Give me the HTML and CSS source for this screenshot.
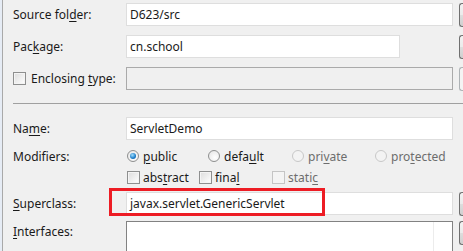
FILE: index.html
```html
<!DOCTYPE html>
<html>
<head>
<meta charset="utf-8">
<link rel="stylesheet" href="styles.css">
</head>
<body>
<div class="frame">
  <div class="row r1">
    <div class="label">Source fol<u>d</u>er:</div>
    <div class="field">D623/src</div>
    <div class="btn"></div>
  </div>
  <div class="row r2">
    <div class="label">Pac<u>k</u>age:</div>
    <div class="field short">cn.school</div>
    <div class="btn"></div>
  </div>
  <div class="row r3">
    <div class="label chklabel"><span class="chk"></span><span>Enclosing <u>t</u>ype:</span></div>
    <div class="field disabled"></div>
    <div class="btn dis"></div>
  </div>
  <div class="sep"></div>
  <div class="row r4">
    <div class="label">Na<u>m</u>e:</div>
    <div class="field">ServletDemo</div>
  </div>
  <div class="row r5">
    <div class="label">Modifiers:</div>
    <div class="opts">
      <span class="opt w81"><span class="radio on"></span><span><u>p</u>ublic</span></span>
      <span class="opt w84"><span class="radio"></span><span>defa<u>u</u>lt</span></span>
      <span class="opt w83 off"><span class="radio dis"></span><span>pri<u>v</u>ate</span></span>
      <span class="opt off"><span class="radio dis"></span><span>pro<u>t</u>ected</span></span>
    </div>
  </div>
  <div class="row r6">
    <div class="label"></div>
    <div class="opts">
      <span class="opt w72"><span class="chk"></span><span>abs<u>t</u>ract</span></span>
      <span class="opt w73"><span class="chk"></span><span>fina<u>l</u></span></span>
      <span class="opt off"><span class="chk dis"></span><span>stati<u>c</u></span></span>
    </div>
  </div>
  <div class="row r7">
    <div class="label"><u>S</u>uperclass:</div>
    <div class="field">javax.servlet.GenericServlet</div>
    <div class="btn"></div>
    <div class="redbox"></div>
  </div>
  <div class="row r8">
    <div class="label top"><u>I</u>nterfaces:</div>
    <div class="list"><div class="track"></div></div>
    <div class="btn"></div>
  </div>
</div>
</body>
</html>
```

FILE: styles.css
```css
html, body {
  margin: 0;
  padding: 0;
  width: 463px;
  height: 251px;
  overflow: hidden;
  background: #f0f0f0;
}
body {
  font-family: "Noto Sans", "Open Sans", sans-serif;
  font-size: 12px;
  color: #1a1a1a;
}
u { text-decoration: underline; text-underline-offset: 2px; }
.frame {
  position: relative;
  margin-left: 2px;
  border-left: 1px solid #a9a9a9;
  height: 251px;
  box-shadow: -2px 0 0 #e6ecf5;
  padding-left: 10px;
  box-sizing: border-box;
  overflow: hidden;
}
.row {
  display: flex;
  align-items: center;
  height: 23px;
  position: relative;
}
.label {
  width: 113px;
  flex: none;
  white-space: nowrap;
}
.chklabel { display: flex; align-items: center; }
.chklabel .chk { margin-right: 5px; }
.field {
  width: 327px;
  height: 23px;
  box-sizing: border-box;
  background: #fff;
  border: 1px solid #dedede;
  padding-left: 3px;
  line-height: 21px;
  flex: none;
  white-space: nowrap;
  overflow: hidden;
}
.field.short { width: 274px; margin-right: 53px; }
.field.disabled { background: #f0f0f0; border-color: #aaaaaa; }
.btn {
  margin-left: 6px;
  width: 4px;
  height: 24px;
  box-sizing: border-box;
  border: 1px solid #707070;
  border-right: none;
  border-radius: 3px 0 0 3px;
  background: linear-gradient(#f2f2f2, #ebebeb 50%, #dddddd 51%, #cfcfcf);
  flex: none;
}
.btn.dis { border-color: #adb2b5; background: #f4f4f4; }
.r1 { margin-top: 3px; }
.r2 { margin-top: 9px; }
.r3 { margin-top: 9px; }
.sep {
  height: 1px;
  background: #a0a0a0;
  margin-top: 13px;
}
.r4 { margin-top: 13px; }
.r5 { margin-top: 7px; height: 18px; }
.r6 { margin-top: 3px; height: 18px; }
.r7 { margin-top: 6px; }
.r8 { margin-top: 6px; height: 40px; align-items: flex-start; }
.label.top { padding-top: 2px; }
.opts { display: flex; align-items: center; margin-left: 1px; }
.opt { display: flex; align-items: center; white-space: nowrap; flex: none; }
.opt.off { color: #6d6d6d; }
.w81 { width: 81px; }
.w84 { width: 84px; }
.w83 { width: 83px; }
.w72 { width: 72px; }
.w73 { width: 73px; }
.radio {
  width: 12px;
  height: 12px;
  box-sizing: border-box;
  border-radius: 50%;
  border: 1px solid #8e8f8f;
  background: radial-gradient(circle at 60% 65%, #ffffff, #e3e3e3);
  margin-right: 4px;
  position: relative;
  flex: none;
}
.radio.on::after {
  content: "";
  position: absolute;
  left: 2px; top: 2px;
  width: 6px; height: 6px;
  border-radius: 50%;
  background: radial-gradient(circle at 40% 35%, #a3e0ff, #1a7bc7 60%, #0d5a9e);
}
.radio.dis { border-color: #c8c8c8; background: #f3f3f3; }
.chk {
  width: 13px;
  height: 13px;
  box-sizing: border-box;
  border: 1px solid #8e8f8f;
  background: linear-gradient(135deg, #dcdcdc, #ffffff);
  box-shadow: inset 0 0 0 1px #f4f4f4;
  margin-right: 3px;
  flex: none;
}
.chk.dis { border-color: #c5c5c5; background: #f4f4f4; box-shadow: none; }
.list {
  position: relative;
  width: 327px;
  height: 40px;
  box-sizing: border-box;
  background: #fff;
  border: 1px solid #828282;
  border-bottom: none;
  flex: none;
}
.track {
  position: absolute;
  left: 306px;
  top: 0;
  width: 1px;
  height: 100%;
  background: #ececec;
}
.redbox {
  position: absolute;
  left: 96px;
  top: -4px;
  width: 216px;
  height: 28px;
  box-sizing: border-box;
  border: 3px solid #ed1c24;
}
```
